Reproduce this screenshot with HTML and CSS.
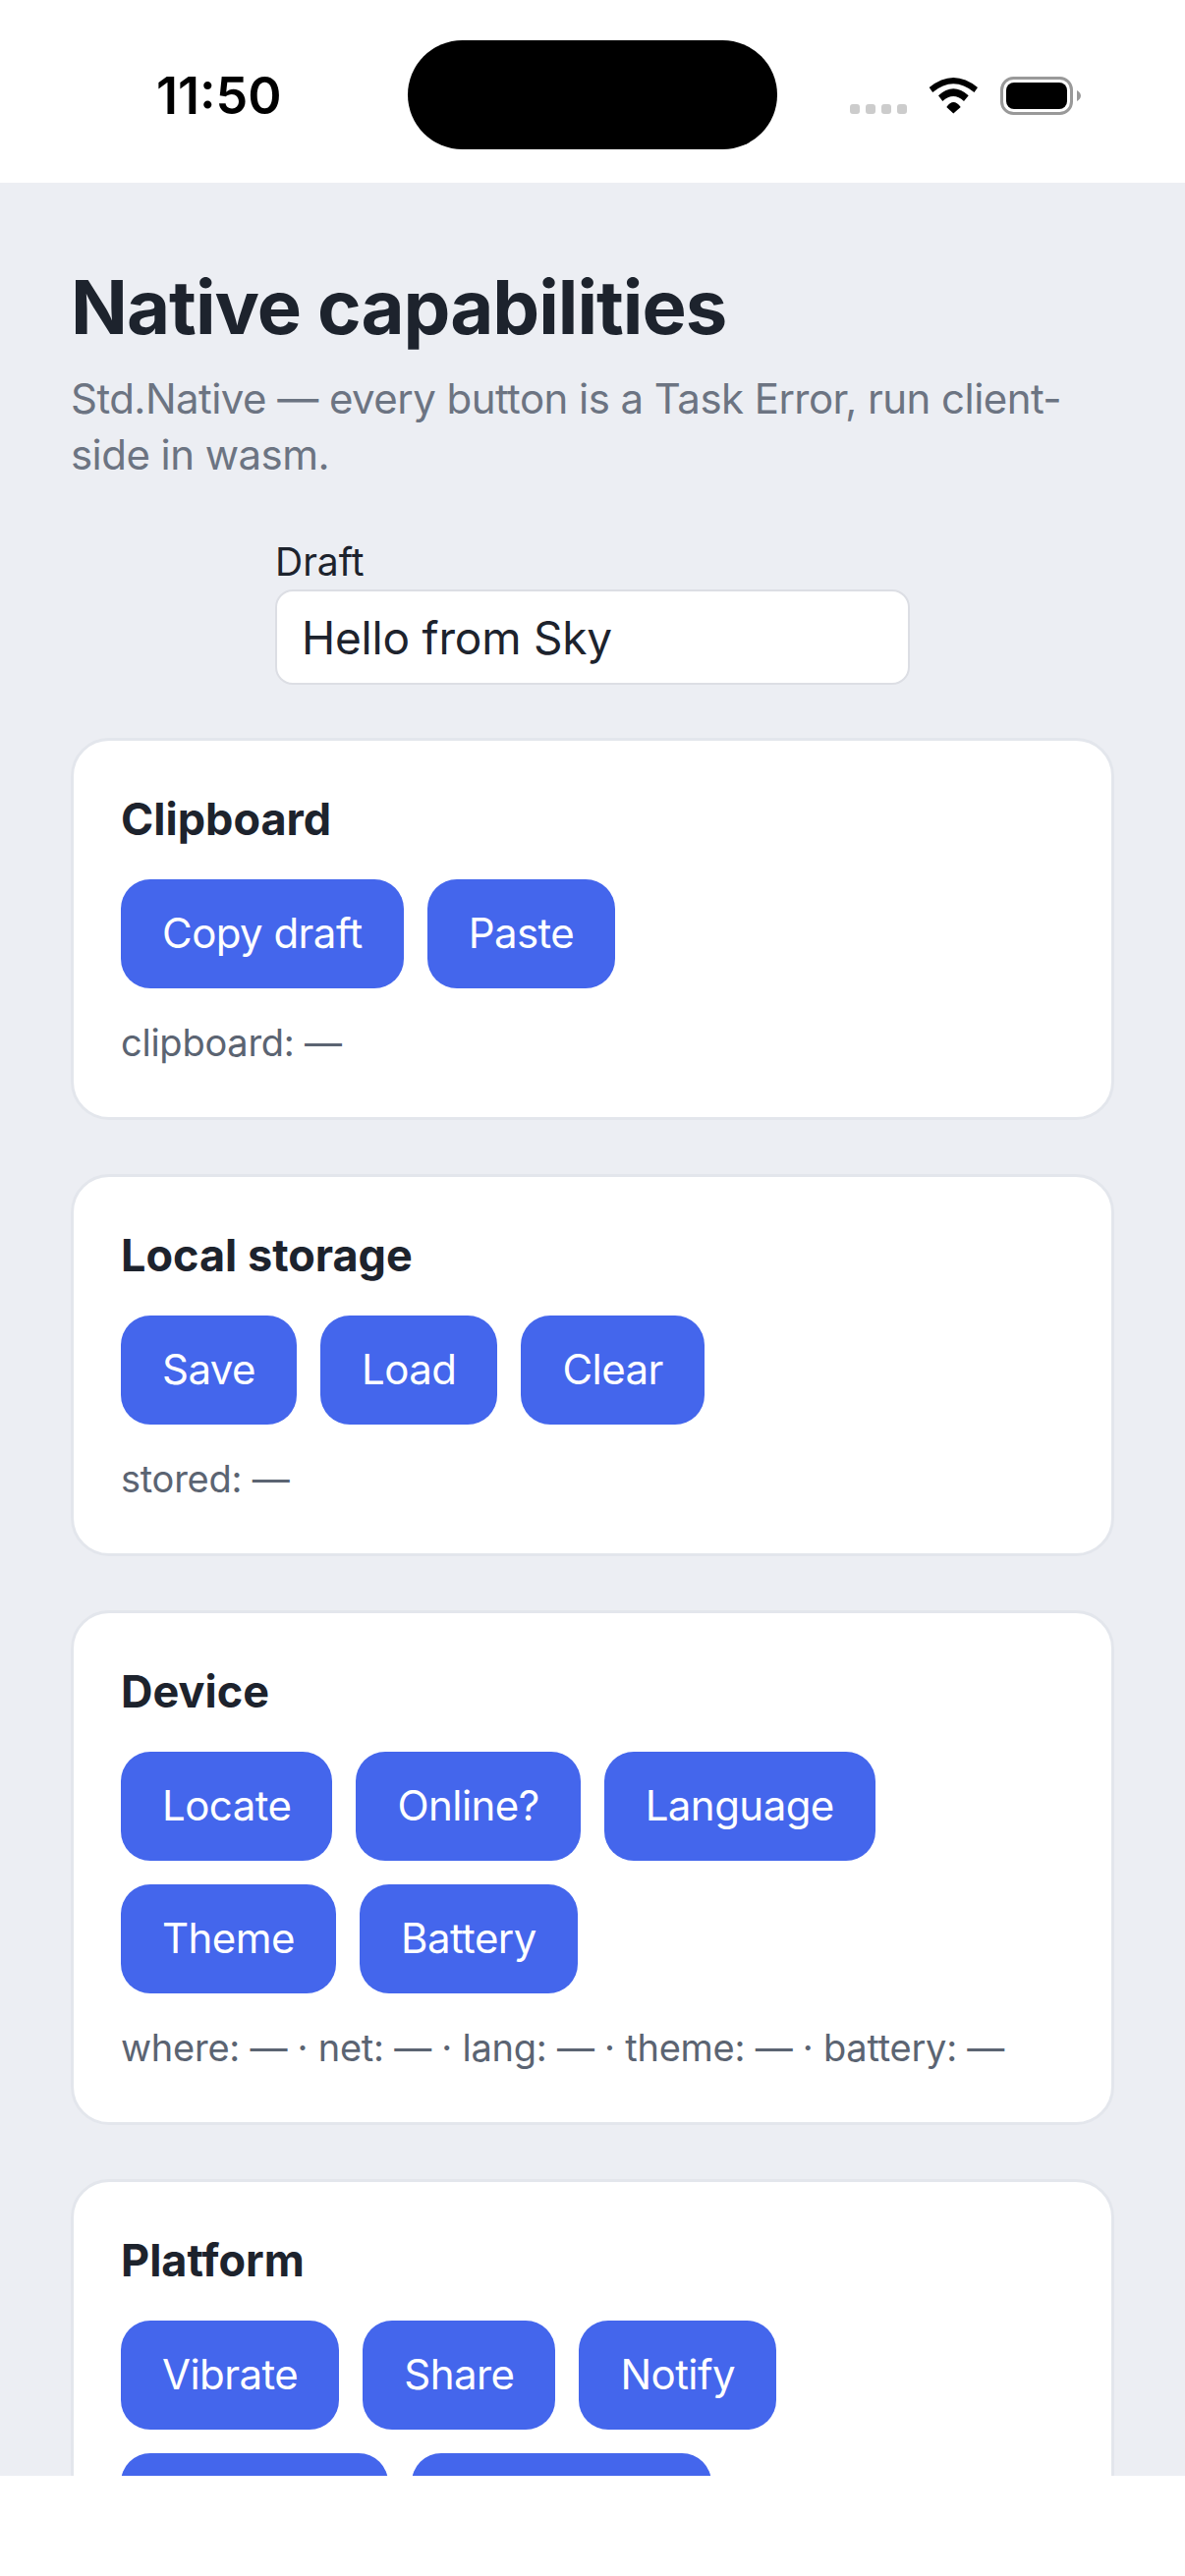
FILE: index.html
```html
<!DOCTYPE html>
<html lang="en">
<head>
<meta charset="utf-8">
<title>Native capabilities</title>
<link rel="stylesheet" href="styles.css">
</head>
<body>
<div class="phone">
  <header class="statusbar">
    <div class="time">11:50</div>
    <div class="island"></div>
    <div class="status-icons">
      <div class="dots"><i></i><i></i><i></i><i></i></div>
      <svg class="wifi" width="52" height="38" viewBox="0 0 52 38" aria-hidden="true">
        <path d="M0.700 11Q25.300 -9 50 11L46.500 16Q25.300 -1.500 4.200 16Z"/>
        <path d="M10 19.300Q25.300 5.300 40.700 19.300L36 25Q25.300 15 14.300 25Z"/>
        <path d="M18.300 31Q25.300 21 32.700 31L25.300 37.500Z"/>
      </svg>
      <svg class="battery" width="84" height="40" viewBox="0 0 84 40" aria-hidden="true">
        <rect x="1.500" y="1.500" width="71" height="36" rx="12" fill="none" stroke="#999" stroke-width="3"/>
        <rect x="6" y="6" width="62" height="27" rx="8"/>
        <path d="M78 14c2 1 4 3 4 5.500s-2 4.500-4 5.500z" fill="#999"/>
      </svg>
    </div>
  </header>
  <main class="page">
    <h1>Native capabilities</h1>
    <p class="lede">Std.Native — every button is a Task Error, run client-side in wasm.</p>
    <div class="field">
      <label for="draft">Draft</label>
      <input id="draft" type="text" value="Hello from Sky">
    </div>
    <section class="card">
      <h2>Clipboard</h2>
      <div class="buttons"><button>Copy draft</button><button>Paste</button></div>
      <p class="result">clipboard: —</p>
    </section>
    <section class="card">
      <h2>Local storage</h2>
      <div class="buttons"><button>Save</button><button>Load</button><button>Clear</button></div>
      <p class="result">stored: —</p>
    </section>
    <section class="card">
      <h2>Device</h2>
      <div class="buttons"><button>Locate</button><button>Online?</button><button>Language</button><button>Theme</button><button>Battery</button></div>
      <p class="result">where: — · net: — · lang: — · theme: — · battery: —</p>
    </section>
    <section class="card">
      <h2>Platform</h2>
      <div class="buttons"><button>Vibrate</button><button>Share</button><button>Notify</button></div>
      <div class="buttons"><button>Open Tab</button><button>Pick a file…</button></div>
    </section>
  </main>
  <footer class="homebar"></footer>
</div>
</body>
</html>
```
FILE: styles.css
```css
* { box-sizing: border-box; }
html, body { margin: 0; padding: 0; background: #fff; }
body { font-family: Inter, "Liberation Sans", sans-serif; color: #1d232d; }
.phone { width: 1206px; height: 2622px; display: flex; flex-direction: column; overflow: hidden; }
.statusbar { height: 186px; flex: none; background: #fff; display: flex; align-items: flex-start; }
.time { font-size: 52px; font-weight: 600; line-height: 62px; margin: 67px 0 0 159px; width: 256px; color: #000; }
.island { width: 376px; height: 111px; margin-top: 41px; background: #000; border-radius: 56px; flex: none; }
.status-icons { display: flex; align-items: flex-start; margin: 78px 0 0 74px; }
.dots { display: flex; gap: 6px; margin-top: 28px; }
.dots i { display: block; width: 10px; height: 10px; border-radius: 3px; background: #ccc; }
.wifi { margin-left: 22px; }
.battery { margin-left: 21px; }
.page { flex: 1; min-height: 0; overflow: hidden; background: #eceef3; padding: 83px 72px 0; }
h1 { font-size: 76px; font-weight: 700; line-height: 86px; margin: 0; color: #1d232d; letter-spacing: -1px; }
.lede { font-size: 42px; line-height: 57px; margin: 22px 0 0; color: #6c7482; letter-spacing: -0.55px; }
.field { width: 646px; margin: 57px auto 0; }
.field label { display: block; font-size: 39px; line-height: 48px; margin-bottom: 4px; }
.field input { display: block; width: 100%; height: 97px; border: 2px solid #dcdee4; border-radius: 18px; background: #fff; padding: 0 25px; font: 400 46px Inter, sans-serif; letter-spacing: -0.2px; color: #1d232d; }
.card { background: #fff; border: 3px solid #e3e6ec; border-radius: 39px; padding: 53px 48px 52px; margin-top: 55px; }
.field + .card { margin-top: 54px; }
h2 { font-size: 45px; font-weight: 700; line-height: 54px; margin: 0 0 34px; color: #1d232d; }
.buttons { display: flex; flex-wrap: wrap; gap: 24px; }
.buttons + .buttons { margin-top: 24px; }
button { height: 111px; padding: 0 42px 3px; border: 0; border-radius: 30px; background: #4466ec; color: #fff; font: 400 42px Inter, sans-serif; letter-spacing: -0.55px; }
.result { font-size: 38px; line-height: 48px; margin: 31px 0 0; color: #5b6472; letter-spacing: -0.25px; }
.homebar { height: 102px; flex: none; background: #fff; }
```
